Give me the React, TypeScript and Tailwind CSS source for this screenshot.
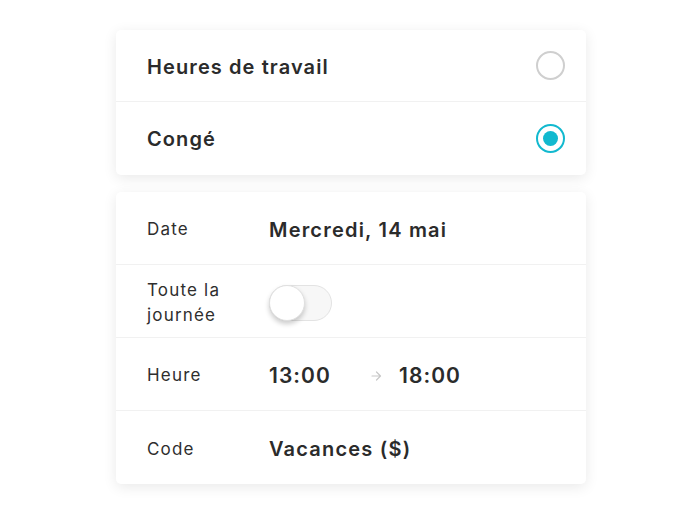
import React, { useState } from "react";

const Radio = ({ checked }: { checked: boolean }) => (
  <div
    className={
      checked
        ? "w-[29px] h-[29px] rounded-full border-2 border-[#12b9cf] flex items-center justify-center"
        : "w-[29px] h-[29px] rounded-full border-2 border-[#cfcfcf]"
    }
  >
    {checked ? <div className="w-[15px] h-[15px] rounded-full bg-[#12b9cf]" /> : null}
  </div>
);

const Row = ({ label, children, last }: { label: string; children?: React.ReactNode; last?: boolean }) => (
  <div className={"flex items-center h-[73px] pl-[31px] pt-[3px] " + (last ? "" : "border-b border-[#f1f1f1]")}>
    <div className="w-[122px] text-[17px] leading-[25px] tracking-[0.07em] text-[#2e2e2e]">{label}</div>
    <div className="flex items-center">{children}</div>
  </div>
);

const App = () => {
  const [mode, setMode] = useState("conge");
  const [allDay, setAllDay] = useState(false);

  return (
    <div className="w-[700px] h-[516px] bg-white pt-[30px] font-['Inter','Liberation_Sans',sans-serif] text-[#2b2b2b]">
      <div className="w-[470px] ml-[116px] bg-white rounded-[5px] shadow-[0_3px_14px_rgba(0,0,0,0.09)]">
        <div
          className="flex items-center justify-between h-[72px] pl-[31px] pr-[21px] border-b border-[#f1f1f1] cursor-pointer"
          onClick={() => setMode("travail")}
        >
          <span className="text-[20px] font-semibold tracking-[0.055em] mt-[2px]">Heures de travail</span>
          <Radio checked={mode === "travail"} />
        </div>
        <div
          className="flex items-center justify-between h-[73px] pl-[31px] pr-[21px] cursor-pointer"
          onClick={() => setMode("conge")}
        >
          <span className="text-[20px] font-semibold tracking-[0.055em]">Congé</span>
          <Radio checked={mode === "conge"} />
        </div>
      </div>

      <div className="w-[470px] ml-[116px] mt-[17px] bg-white rounded-[5px] shadow-[0_3px_14px_rgba(0,0,0,0.09)]">
        <Row label="Date">
          <span className="text-[20px] font-semibold tracking-[0.06em]">Mercredi, 14 mai</span>
        </Row>
        <Row label="Toute la journée">
          <button
            onClick={() => setAllDay(!allDay)}
            className={
              "relative w-[63px] h-[36px] rounded-full border border-[#e3e3e3] " +
              (allDay ? "bg-[#12b9cf]" : "bg-[#f7f7f7]")
            }
          >
            <span
              className={
                "absolute top-[-1px] w-[36px] h-[36px] rounded-full bg-white border border-[#e0e0e0] shadow-[0_3px_5px_rgba(0,0,0,0.2)] " +
                (allDay ? "left-[26px]" : "left-[-1px]")
              }
            />
          </button>
        </Row>
        <Row label="Heure">
          <span className="text-[21px] font-semibold tracking-[0.05em] w-[102px]">13:00</span>
          <svg width="11" height="10" viewBox="0 0 11 10" className="mr-[17px]">
            <path d="M1 5h8.5M5.5 1l4 4-4 4" fill="none" stroke="#c8c8c8" strokeWidth="1.2" strokeLinecap="round" strokeLinejoin="round" />
          </svg>
          <span className="text-[21px] font-semibold tracking-[0.05em]">18:00</span>
        </Row>
        <Row label="Code" last>
          <span className="text-[20px] font-semibold tracking-[0.06em]">Vacances ($)</span>
        </Row>
      </div>
    </div>
  );
};

export default App;
